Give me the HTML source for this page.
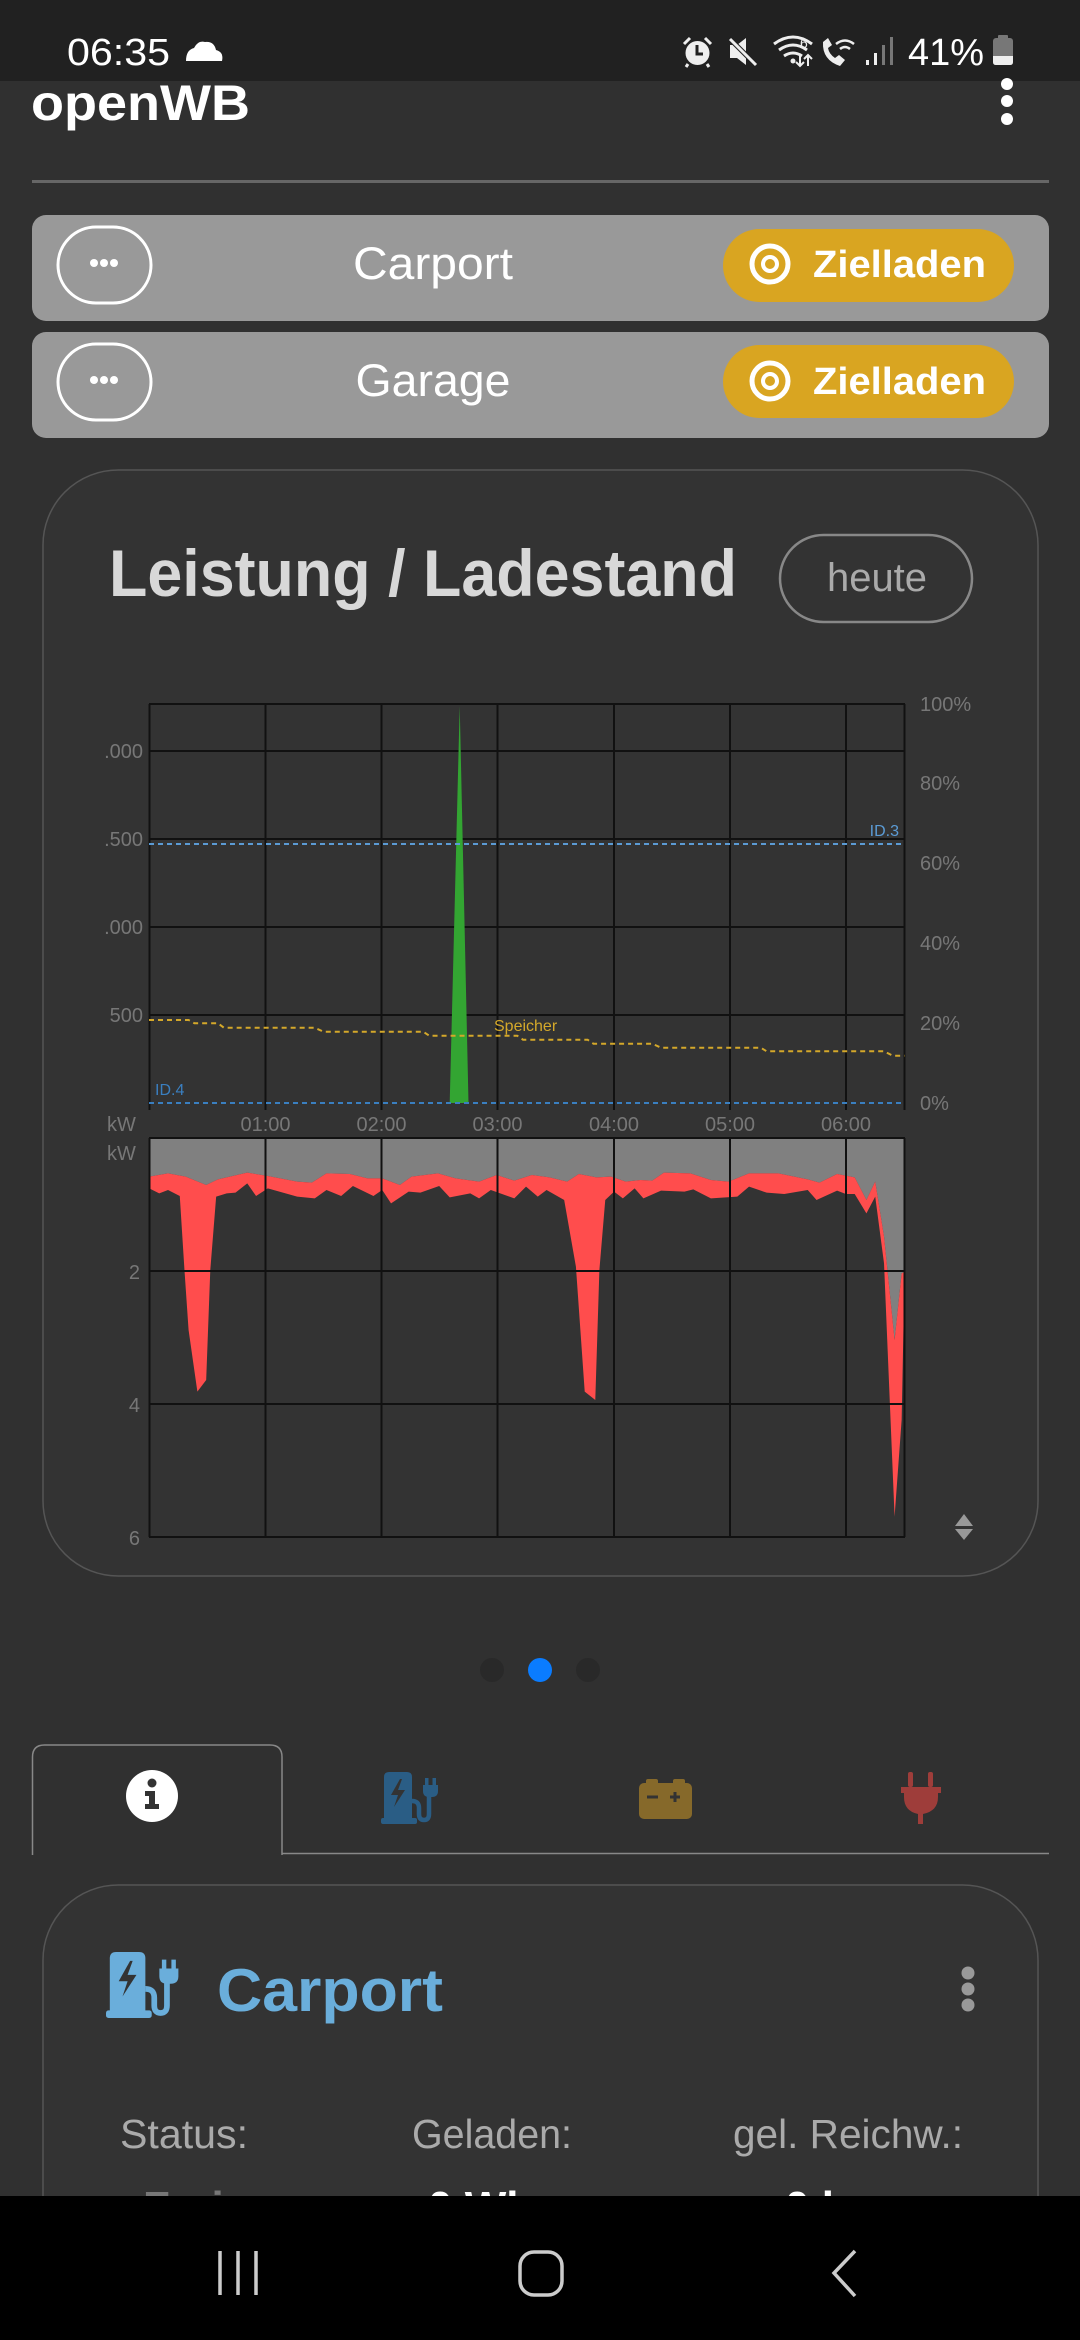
<!DOCTYPE html>
<html><head><meta charset="utf-8"><style>
html,body{margin:0;padding:0;background:#303030;width:1080px;height:2340px;overflow:hidden;}
svg{display:block;}
text{font-family:"Liberation Sans",sans-serif;}
</style></head><body>
<svg width="1080" height="2340" viewBox="0 0 1080 2340" xmlns="http://www.w3.org/2000/svg">
<defs>
<g id="station">
  <path d="M8 0 H26 Q31 0 31 5 V47 H3 V5 Q3 0 8 0 Z"/>
  <rect x="0" y="46" width="36" height="6" rx="2"/>
  <path d="M31 29 Q38 29 38 36 V42 Q38 48 43 48 Q48 48 48 42 V24" fill="none" stroke-width="4.5" stroke="currentColor"/>
  <path d="M42 13 H57 V19 Q57 25 51 25 H48 Q42 25 42 19 Z"/>
  <rect x="44" y="6" width="3.5" height="8"/>
  <rect x="51.5" y="6" width="3.5" height="8"/>
  <path d="M19 7 L10 23 H17 L13 35 L24 18 H17 L21 7 Z" fill="#333"/>
</g>
</defs>
<rect width="1080" height="2340" fill="#303030"/>

<rect width="1080" height="81" fill="#212121"/>
<text x="67" y="65" font-size="38" fill="#fff" textLength="103" lengthAdjust="spacingAndGlyphs">06:35</text>
<path d="M186 61 H222 Q224 52 216 50 Q214 41 205 42 Q198 40 194 48 Q186 50 186 61 Z" fill="#fff"/>
<circle cx="697.5" cy="53" r="12" fill="#eee"/>
<path d="M697 45 V54 H703" stroke="#212121" stroke-width="3" fill="none"/>
<path d="M684 44 L690 38 M711 44 L705 38 M688 64 L686 67 M707 64 L709 67" stroke="#eee" stroke-width="3"/>
<path d="M730 45 H737 L746 38 V65 L737 58 H730 Z" fill="#eee"/>
<path d="M729 38 L757 66" stroke="#212121" stroke-width="5"/>
<path d="M730 39 L756 65" stroke="#eee" stroke-width="3"/>
<path d="M774 44 Q793 30 812 44 M779 50 Q793 40 807 50 M784 56 Q793 50 802 56" stroke="#eee" stroke-width="3" fill="none"/>
<circle cx="793" cy="61" r="2.5" fill="#eee"/>
<text x="800" y="48" font-size="14" fill="#eee">6</text>
<path d="M800 55 V66 M796 62 L800 66 L804 62 M808 66 V55 M804 59 L808 55 L812 59" stroke="#eee" stroke-width="2" fill="none"/>
<path d="M823 42 Q822 60 840 66 L845 60 L839 55 L835 58 Q829 54 828 48 L832 45 L828 38 Z" fill="#eee"/>
<path d="M836 44 Q845 37 854 44 M840 49 Q845 45 850 49" stroke="#eee" stroke-width="2.5" fill="none"/>
<rect x="866" y="60" width="3" height="5" fill="#eee"/>
<rect x="874" y="53" width="3" height="12" fill="#eee"/>
<rect x="882" y="45" width="3" height="20" fill="#777"/>
<rect x="890" y="37" width="3" height="28" fill="#777"/>
<text x="908" y="65" font-size="38" fill="#fff" textLength="76" lengthAdjust="spacingAndGlyphs">41%</text>
<rect x="998" y="35" width="10" height="4" rx="1" fill="#777"/>
<rect x="993" y="38" width="20" height="27" rx="3" fill="#777"/>
<path d="M993 56 H1013 V62 Q1013 65 1010 65 H996 Q993 65 993 62 Z" fill="#eee"/>

<text x="31" y="120" font-size="50" font-weight="bold" fill="#fff" textLength="219" lengthAdjust="spacingAndGlyphs">openWB</text>
<circle cx="1007" cy="84" r="6" fill="#fff"/>
<circle cx="1007" cy="101" r="6" fill="#fff"/>
<circle cx="1007" cy="119" r="6" fill="#fff"/>
<rect x="32" y="180" width="1017" height="3" fill="#666"/>

<rect x="32" y="215" width="1017" height="106" rx="14" fill="#999"/>
<rect x="58" y="227" width="93" height="76" rx="38" fill="none" stroke="#fff" stroke-width="3"/>
<circle cx="94" cy="263" r="4" fill="#fff"/><circle cx="104" cy="263" r="4" fill="#fff"/><circle cx="114" cy="263" r="4" fill="#fff"/>
<text x="433" y="279" font-size="45" fill="#fff" text-anchor="middle" textLength="160" lengthAdjust="spacingAndGlyphs">Carport</text>
<rect x="723" y="229" width="291" height="73" rx="36.5" fill="#d9a521"/>
<circle cx="770" cy="264" r="18" fill="none" stroke="#fff" stroke-width="5"/>
<circle cx="770" cy="264" r="7" fill="none" stroke="#fff" stroke-width="4"/>
<text x="813" y="277" font-size="38" font-weight="bold" fill="#fff" textLength="173" lengthAdjust="spacingAndGlyphs">Zielladen</text>

<rect x="32" y="332" width="1017" height="106" rx="14" fill="#999"/>
<rect x="58" y="344" width="93" height="76" rx="38" fill="none" stroke="#fff" stroke-width="3"/>
<circle cx="94" cy="380" r="4" fill="#fff"/><circle cx="104" cy="380" r="4" fill="#fff"/><circle cx="114" cy="380" r="4" fill="#fff"/>
<text x="433" y="396" font-size="45" fill="#fff" text-anchor="middle" textLength="155" lengthAdjust="spacingAndGlyphs">Garage</text>
<rect x="723" y="345" width="291" height="73" rx="36.5" fill="#d9a521"/>
<circle cx="770" cy="381" r="18" fill="none" stroke="#fff" stroke-width="5"/>
<circle cx="770" cy="381" r="7" fill="none" stroke="#fff" stroke-width="4"/>
<text x="813" y="394" font-size="38" font-weight="bold" fill="#fff" textLength="173" lengthAdjust="spacingAndGlyphs">Zielladen</text>

<rect x="43" y="470" width="995" height="1106" rx="75" fill="#333" stroke="#555" stroke-width="1.5"/>
<text x="109" y="596" font-size="66" font-weight="bold" fill="#d8d8d8" textLength="628" lengthAdjust="spacingAndGlyphs">Leistung / Ladestand</text>
<rect x="780" y="535" width="192" height="87" rx="43.5" fill="none" stroke="#888" stroke-width="2.5"/>
<text x="877" y="591" font-size="40" fill="#aaa" text-anchor="middle" textLength="100" lengthAdjust="spacingAndGlyphs">heute</text>

<g stroke="#111" stroke-width="2">
  <line x1="149" y1="704" x2="905" y2="704"/>
  <line x1="149" y1="751" x2="905" y2="751"/>
  <line x1="149" y1="839" x2="905" y2="839"/>
  <line x1="149" y1="927" x2="905" y2="927"/>
  <line x1="149" y1="1015" x2="905" y2="1015"/>
  <line x1="149.5" y1="704" x2="149.5" y2="1110"/>
  <line x1="265.5" y1="704" x2="265.5" y2="1110"/>
  <line x1="381.5" y1="704" x2="381.5" y2="1110"/>
  <line x1="497.5" y1="704" x2="497.5" y2="1110"/>
  <line x1="614" y1="704" x2="614" y2="1110"/>
  <line x1="730" y1="704" x2="730" y2="1110"/>
  <line x1="846" y1="704" x2="846" y2="1110"/>
  <line x1="904.5" y1="704" x2="904.5" y2="1110"/>
</g>
<polygon points="459.7,706 449.7,1103 468.5,1103" fill="#33a532"/>
<line x1="149" y1="844" x2="905" y2="844" stroke="#5b9bd5" stroke-width="2" stroke-dasharray="5 4"/>
<line x1="149" y1="1103" x2="905" y2="1103" stroke="#3a7fc0" stroke-width="2" stroke-dasharray="5 4"/>
<polyline points="149,1020 188.6,1020 194.4,1023.3 218,1023.3 223.8,1027.7 314.7,1027.7 323.5,1031.7 423.3,1031.7 429.2,1035.7 517.2,1035.7 523,1039.7 587.6,1039.7 593.5,1043.7 652.2,1043.7 661,1047.7 760.8,1047.7 766.6,1051.3 884,1051.3 892.8,1055.7 904.5,1055.7" fill="none" stroke="#d4a82a" stroke-width="2" stroke-dasharray="5 4"/>
<text x="494" y="1031" font-size="16" fill="#d4a82a">Speicher</text>
<text x="899" y="836" font-size="16" fill="#5b9bd5" text-anchor="end">ID.3</text>
<text x="155" y="1095" font-size="16" fill="#3a7fc0">ID.4</text>
<g font-size="20" fill="#777">
  <text x="143" y="758" text-anchor="end">.000</text>
  <text x="143" y="846" text-anchor="end">.500</text>
  <text x="143" y="934" text-anchor="end">.000</text>
  <text x="143" y="1022" text-anchor="end">500</text>
  <text x="920" y="711">100%</text>
  <text x="920" y="790">80%</text>
  <text x="920" y="870">60%</text>
  <text x="920" y="950">40%</text>
  <text x="920" y="1030">20%</text>
  <text x="920" y="1110">0%</text>
  <text x="107" y="1131">kW</text>
  <text x="265.5" y="1131" text-anchor="middle">01:00</text>
  <text x="381.5" y="1131" text-anchor="middle">02:00</text>
  <text x="497.5" y="1131" text-anchor="middle">03:00</text>
  <text x="614" y="1131" text-anchor="middle">04:00</text>
  <text x="730" y="1131" text-anchor="middle">05:00</text>
  <text x="846" y="1131" text-anchor="middle">06:00</text>
  <text x="107" y="1160">kW</text>
  <text x="140" y="1279" text-anchor="end">2</text>
  <text x="140" y="1412" text-anchor="end">4</text>
  <text x="140" y="1545" text-anchor="end">6</text>
</g>

<g transform="translate(80,1120) scale(0.58688,0.33333)">
  <polygon fill="#808080" points="118,55 1405,55 1405,455 1400,460 1388,660 1370,350 1355,185 1340,240 1320,172 1290,162 1260,188 1240,178 1190,160 1140,160 1105,185 1075,180 1040,160 995,158 975,182 955,180 930,185 905,170 880,172 850,162 830,185 800,172 770,165 740,182 710,165 680,185 640,175 610,160 565,170 545,195 515,175 490,175 460,162 420,160 395,188 370,185 320,168 285,158 235,178 215,195 180,170 150,160 118,170"/>
  <polygon fill="#ff4d4d" points="118,170 150,160 180,170 215,195 235,178 285,158 320,168 370,185 395,188 420,160 460,162 490,175 515,175 545,195 565,170 610,160 640,175 680,185 710,165 740,182 770,165 800,172 830,185 850,162 880,172 905,170 930,185 955,180 975,182 995,158 1040,160 1075,180 1105,185 1140,160 1190,160 1240,178 1260,188 1290,162 1320,172 1340,240 1355,185 1370,350 1388,660 1400,460 1405,455 1405,460 1400,900 1388,1190 1370,430 1355,230 1340,280 1320,222 1305,222 1290,212 1255,240 1240,210 1200,222 1170,218 1140,200 1120,230 1075,235 1045,208 1030,215 990,212 960,235 945,205 925,235 910,215 895,240 885,450 878,840 860,815 845,440 825,240 795,210 780,230 760,200 740,235 700,210 680,235 665,220 630,232 612,198 580,218 560,215 530,250 515,210 500,228 465,198 445,228 420,210 400,235 370,230 320,205 300,228 285,190 265,218 250,220 232,230 222,450 215,780 200,815 185,630 178,450 170,228 150,210 135,220 118,205"/>
</g>
<g stroke="#111" stroke-width="2">
  <line x1="149" y1="1138" x2="905" y2="1138"/>
  <line x1="149" y1="1271" x2="905" y2="1271"/>
  <line x1="149" y1="1404" x2="905" y2="1404"/>
  <line x1="149" y1="1537" x2="905" y2="1537"/>
  <line x1="149.5" y1="1138" x2="149.5" y2="1537"/>
  <line x1="265.5" y1="1138" x2="265.5" y2="1537"/>
  <line x1="381.5" y1="1138" x2="381.5" y2="1537"/>
  <line x1="497.5" y1="1138" x2="497.5" y2="1537"/>
  <line x1="614" y1="1138" x2="614" y2="1537"/>
  <line x1="730" y1="1138" x2="730" y2="1537"/>
  <line x1="846" y1="1138" x2="846" y2="1537"/>
  <line x1="904.5" y1="1138" x2="904.5" y2="1537"/>
</g>
<polygon points="964,1514 955,1526 973,1526" fill="#999"/>
<polygon points="964,1540 955,1529 973,1529" fill="#999"/>

<circle cx="492" cy="1670" r="12" fill="#292929"/>
<circle cx="540" cy="1670" r="12" fill="#0a7cff"/>
<circle cx="588" cy="1670" r="12" fill="#292929"/>

<line x1="282" y1="1853.5" x2="1049" y2="1853.5" stroke="#888" stroke-width="1.5"/>
<path d="M32.5 1855 V1757 Q32.5 1745 44.5 1745 H270 Q282 1745 282 1757 V1855" fill="none" stroke="#888" stroke-width="1.5"/>
<circle cx="152" cy="1796" r="26" fill="#fff"/>
<circle cx="152" cy="1783" r="4.5" fill="#333"/>
<path d="M145 1791 H155 V1804 H159 V1809 H145 V1804 H149 V1796 H145 Z" fill="#333"/>
<g transform="translate(381,1772)" fill="#2a5d85" color="#2a5d85"><use href="#station"/></g>
<rect x="646" y="1779" width="12" height="6" rx="2" fill="#86692a"/>
<rect x="673" y="1779" width="12" height="6" rx="2" fill="#86692a"/>
<rect x="639" y="1783" width="53" height="36" rx="5" fill="#86692a"/>
<path d="M647 1797 H658 M670 1797 H680 M675 1792 V1802" stroke="#333" stroke-width="3"/>
<rect x="908" y="1772" width="5" height="15" rx="2" fill="#9e3d3a"/>
<rect x="928" y="1772" width="5" height="15" rx="2" fill="#9e3d3a"/>
<path d="M901 1787 H941 V1793 H938 V1797 Q938 1811 923 1814 V1824 H918 V1814 Q904 1811 904 1797 V1793 H901 Z" fill="#9e3d3a"/>

<rect x="43" y="1885" width="995" height="440" rx="75" fill="#333" stroke="#555" stroke-width="1.5"/>
<g transform="translate(106,1952) scale(1.27)" fill="#6aaedb" color="#6aaedb"><use href="#station"/></g>
<text x="217" y="2011" font-size="60" font-weight="bold" fill="#6aaedb" textLength="226" lengthAdjust="spacingAndGlyphs">Carport</text>
<circle cx="968" cy="1973" r="6.5" fill="#999"/>
<circle cx="968" cy="1989" r="6.5" fill="#999"/>
<circle cx="968" cy="2005" r="6.5" fill="#999"/>
<g font-size="41" fill="#aaa">
  <text x="120" y="2148" textLength="128" lengthAdjust="spacingAndGlyphs">Status:</text>
  <text x="412" y="2148" textLength="160" lengthAdjust="spacingAndGlyphs">Geladen:</text>
  <text x="733" y="2148" textLength="230" lengthAdjust="spacingAndGlyphs">gel. Reichw.:</text>
</g>
<text x="143" y="2222" font-size="44" font-weight="bold" fill="#777">Frei</text>
<text x="428" y="2222" font-size="44" font-weight="bold" fill="#fff">0 Wh</text>
<text x="785" y="2222" font-size="44" font-weight="bold" fill="#fff">0 km</text>

<rect x="0" y="2196" width="1080" height="144" fill="#000"/>
<g stroke="#ccc" stroke-width="3.5" fill="none">
  <line x1="220" y1="2251" x2="220" y2="2295"/>
  <line x1="238" y1="2251" x2="238" y2="2295"/>
  <line x1="256" y1="2251" x2="256" y2="2295"/>
  <rect x="520" y="2252" width="42" height="43" rx="14"/>
  <path d="M855 2251 L834 2273 L855 2296"/>
</g>
</svg>
</body></html>
